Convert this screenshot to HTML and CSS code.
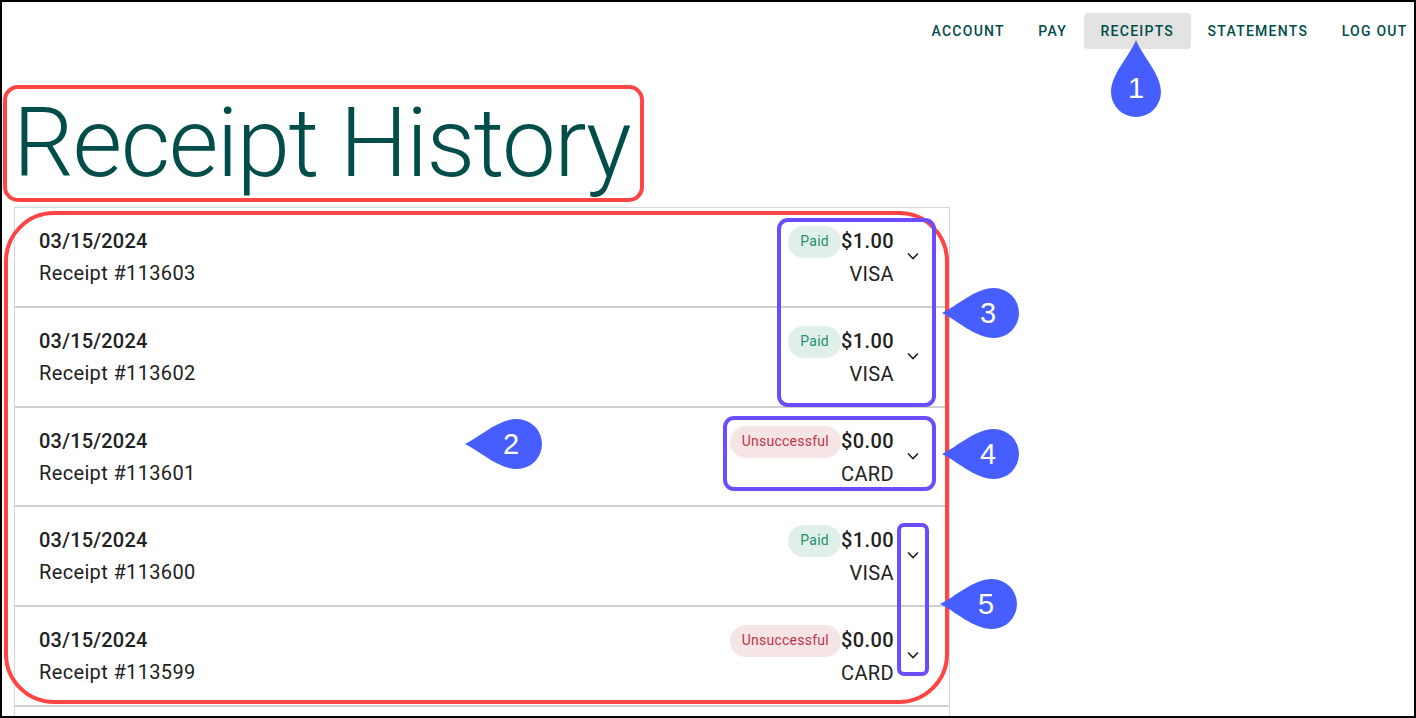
FILE: index.html
```html
<!DOCTYPE html>
<html lang="en">
<head>
    <meta charset="UTF-8">
    <meta name="viewport" content="width=device-width, initial-scale=1.0">
    <title>Receipt History</title>
    <link rel="stylesheet" href="styles.css">
</head>
<body>
    <div class="frame">
        <nav class="topnav">
            <a class="navbtn">Account</a>
            <a class="navbtn">Pay</a>
            <a class="navbtn active">Receipts</a>
            <a class="navbtn">Statements</a>
            <a class="navbtn">Log out</a>
        </nav>

        <h1 class="title">Receipt History</h1>

        <div class="receipts">
            <div class="row">
                <div class="info">
                    <p class="date">03/15/2024</p>
                    <p class="num">Receipt #113603</p>
                </div>
                <div class="side">
                    <span class="badge paid">Paid</span>
                    <div class="pay">
                        <p class="amount">$1.00</p>
                        <p class="method">VISA</p>
                    </div>
                    <svg class="chev" viewBox="0 0 24 24"><path d="M7 9.5l5 5 5-5"/></svg>
                </div>
            </div>
            <div class="row">
                <div class="info">
                    <p class="date">03/15/2024</p>
                    <p class="num">Receipt #113602</p>
                </div>
                <div class="side">
                    <span class="badge paid">Paid</span>
                    <div class="pay">
                        <p class="amount">$1.00</p>
                        <p class="method">VISA</p>
                    </div>
                    <svg class="chev" viewBox="0 0 24 24"><path d="M7 9.5l5 5 5-5"/></svg>
                </div>
            </div>
            <div class="row">
                <div class="info">
                    <p class="date">03/15/2024</p>
                    <p class="num">Receipt #113601</p>
                </div>
                <div class="side">
                    <span class="badge failed">Unsuccessful</span>
                    <div class="pay">
                        <p class="amount">$0.00</p>
                        <p class="method">CARD</p>
                    </div>
                    <svg class="chev" viewBox="0 0 24 24"><path d="M7 9.5l5 5 5-5"/></svg>
                </div>
            </div>
            <div class="row">
                <div class="info">
                    <p class="date">03/15/2024</p>
                    <p class="num">Receipt #113600</p>
                </div>
                <div class="side">
                    <span class="badge paid">Paid</span>
                    <div class="pay">
                        <p class="amount">$1.00</p>
                        <p class="method">VISA</p>
                    </div>
                    <svg class="chev" viewBox="0 0 24 24"><path d="M7 9.5l5 5 5-5"/></svg>
                </div>
            </div>
            <div class="row">
                <div class="info">
                    <p class="date">03/15/2024</p>
                    <p class="num">Receipt #113599</p>
                </div>
                <div class="side">
                    <span class="badge failed">Unsuccessful</span>
                    <div class="pay">
                        <p class="amount">$0.00</p>
                        <p class="method">CARD</p>
                    </div>
                    <svg class="chev" viewBox="0 0 24 24"><path d="M7 9.5l5 5 5-5"/></svg>
                </div>
            </div>
            <div class="row"></div>
        </div>

        <!-- annotations drawn over the screenshot -->
        <div class="marks">
            <div class="box red box-title"></div>
            <div class="box red box-list"></div>
            <div class="box purple box-paid"></div>
            <div class="box purple box-fail"></div>
            <div class="box purple box-chev"></div>

            <div class="pin pin-up pin1">
                <svg viewBox="0 0 52 78"><path d="M26 0C33 17 51 34 51 52A25 25 0 0 1 1 52C1 34 19 17 26 0Z"/></svg>
                <span>1</span>
            </div>
            <div class="pin pin-left pin2">
                <svg viewBox="0 0 78 52"><path d="M0 26C15 19 33 1 52 1A25 25 0 0 1 52 51C33 51 15 33 0 26Z"/></svg>
                <span>2</span>
            </div>
            <div class="pin pin-left pin3">
                <svg viewBox="0 0 78 52"><path d="M0 26C15 19 33 1 52 1A25 25 0 0 1 52 51C33 51 15 33 0 26Z"/></svg>
                <span>3</span>
            </div>
            <div class="pin pin-left pin4">
                <svg viewBox="0 0 78 52"><path d="M0 26C15 19 33 1 52 1A25 25 0 0 1 52 51C33 51 15 33 0 26Z"/></svg>
                <span>4</span>
            </div>
            <div class="pin pin-left pin5">
                <svg viewBox="0 0 78 52"><path d="M0 26C15 19 33 1 52 1A25 25 0 0 1 52 51C33 51 15 33 0 26Z"/></svg>
                <span>5</span>
            </div>
        </div>
    </div>
</body>
</html>
```

FILE: styles.css
```css
*{
    margin: 0;
    padding: 0;
    box-sizing: border-box;
}
body{
    font-family: Roboto, "Liberation Sans", sans-serif;
    background: #fff;
    color: #212121;
}
.frame{
    position: relative;
    width: 1416px;
    height: 718px;
    border: 2px solid #000;
    overflow: hidden;
}

/* nav */
.topnav{
    display: flex;
    justify-content: flex-end;
    padding-top: 11px;
    margin-right: -10px;
}
.navbtn{
    display: flex;
    align-items: center;
    height: 36px;
    padding: 0 16.5px 0 17px;
    border-radius: 4px;
    font-size: 14px;
    font-weight: 500;
    letter-spacing: 1.25px;
    text-transform: uppercase;
    color: #004d4a;
}
.navbtn.active{
    background: #e3e3e3;
}

/* heading */
.title{
    margin: 38px 0 8px 11px;
    font-size: 96px;
    line-height: 112px;
    font-weight: 300;
    letter-spacing: -1.5px;
    color: #004d4a;
}

/* list */
.receipts{
    width: 936px;
    margin-left: 12px;
    border: 1px solid #d6d6d6;
    border-bottom: 0;
}
.row{
    display: flex;
    justify-content: space-between;
    height: 99.75px;
    padding: 17px 24px 0;
    border-bottom: 2px solid #d0d0d0;
}
.date, .num, .amount, .method{
    font-size: 20px;
    line-height: 32px;
}
.num, .method{
    letter-spacing: .35px;
}
.date{
    font-weight: 500;
    letter-spacing: .2px;
}
.amount{
    font-weight: 500;
    letter-spacing: .4px;
}
.method{
    line-height: 34px;
}
.side{
    display: flex;
    align-items: flex-start;
}
.badge{
    height: 32px;
    margin-top: 1px;
    padding: 0 12px;
    border-radius: 16px;
    font-size: 14px;
    line-height: 30px;
    letter-spacing: .25px;
}
.badge.paid{
    background: #e1efeb;
    color: #1f8f70;
}
.badge.failed{
    background: #f5e5e5;
    color: #c0344a;
}
.pay{
    text-align: right;
}
.chev{
    width: 24px;
    height: 24px;
    margin: 19px 0 0 7px;
}
.chev path{
    fill: none;
    stroke: #212121;
    stroke-width: 1.6;
}

/* annotation layer, coordinates are page coordinates */
.marks{
    position: absolute;
    top: -2px;
    left: -2px;
    width: 1416px;
    height: 718px;
}
.box{
    position: absolute;
    border-width: 4px;
    border-style: solid;
}
.red{
    border-color: #ff4444;
}
.purple{
    border-color: #6b4cff;
}
.box-title{
    left: 3px;
    top: 85px;
    width: 641px;
    height: 117px;
    border-radius: 15px;
}
.box-list{
    left: 4px;
    top: 211px;
    width: 945px;
    height: 493px;
    border-radius: 50px;
}
.box-paid{
    left: 777px;
    top: 218px;
    width: 159px;
    height: 189px;
    border-radius: 11px;
}
.box-fail{
    left: 723px;
    top: 416px;
    width: 213px;
    height: 75px;
    border-radius: 11px;
}
.box-chev{
    left: 897px;
    top: 523px;
    width: 32px;
    height: 153px;
    border-radius: 7px;
}
.pin{
    position: absolute;
    display: flex;
    color: #fff;
    font-family: "Liberation Sans", sans-serif;
    font-size: 29px;
}
.pin svg{
    position: absolute;
    left: 0;
    top: 0;
    width: 100%;
    height: 100%;
    fill: #465eff;
}
.pin span{
    position: relative;
    width: 52px;
    height: 52px;
    line-height: 52px;
    text-align: center;
}
.pin-up{
    width: 52px;
    height: 78px;
    align-items: flex-end;
}
.pin-up span{
    margin-bottom: 4px;
}
.pin-left{
    width: 78px;
    height: 52px;
    justify-content: flex-end;
}
.pin-left span{
    margin-right: 6px;
}
.pin1{ left: 1110px; top: 40px; }
.pin2{ left: 465px; top: 418px; }
.pin3{ left: 942px; top: 287px; }
.pin4{ left: 942px; top: 428px; }
.pin5{ left: 940px; top: 578px; }
```
